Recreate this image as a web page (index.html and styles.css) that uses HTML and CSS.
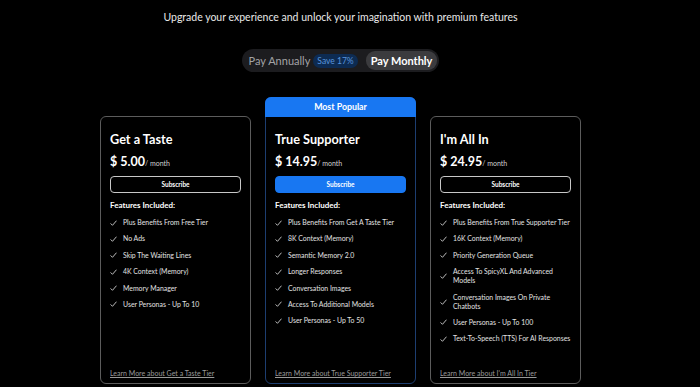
FILE: index.html
```html
<!DOCTYPE html>
<html lang="en">
<head>
    <meta charset="UTF-8">
    <meta name="viewport" content="width=device-width, initial-scale=1.0">
    <title>Upgrade</title>
    <link rel="stylesheet" href="styles.css">
</head>
<body>

    <div class="pricing">
        <p class="tagline">Upgrade your experience and unlock your imagination with premium features</p>

        <!-- Billing period switch -->
        <div class="billing-toggle">
            <span class="toggle-option">Pay Annually</span>
            <span class="save-badge">Save 17%</span>
            <span class="toggle-option active">Pay Monthly</span>
        </div>

        <div class="plans">
            <div class="plan">
                <div class="plan-body">
                    <h2 class="plan-name">Get a Taste</h2>
                    <div class="plan-price">$ 5.00<span class="per">/ month</span></div>
                    <button class="subscribe">Subscribe</button>
                    <div class="features-title">Features Included:</div>
                    <ul class="features">
                        <li><svg class="check" viewBox="0 0 8 7"><path d="M0.6 4 L2.8 6.2 L7.5 0.8"/></svg>Plus Benefits From Free Tier</li>
                        <li><svg class="check" viewBox="0 0 8 7"><path d="M0.6 4 L2.8 6.2 L7.5 0.8"/></svg>No Ads</li>
                        <li><svg class="check" viewBox="0 0 8 7"><path d="M0.6 4 L2.8 6.2 L7.5 0.8"/></svg>Skip The Waiting Lines</li>
                        <li><svg class="check" viewBox="0 0 8 7"><path d="M0.6 4 L2.8 6.2 L7.5 0.8"/></svg>4K Context (Memory)</li>
                        <li><svg class="check" viewBox="0 0 8 7"><path d="M0.6 4 L2.8 6.2 L7.5 0.8"/></svg>Memory Manager</li>
                        <li><svg class="check" viewBox="0 0 8 7"><path d="M0.6 4 L2.8 6.2 L7.5 0.8"/></svg>User Personas - Up To 10</li>
                    </ul>
                    <a class="learn-more" href="#">Learn More about Get a Taste Tier</a>
                </div>
            </div>

            <div class="plan featured">
                <div class="plan-header">Most Popular</div>
                <div class="plan-body">
                    <h2 class="plan-name">True Supporter</h2>
                    <div class="plan-price">$ 14.95<span class="per">/ month</span></div>
                    <button class="subscribe primary">Subscribe</button>
                    <div class="features-title">Features Included:</div>
                    <ul class="features">
                        <li><svg class="check" viewBox="0 0 8 7"><path d="M0.6 4 L2.8 6.2 L7.5 0.8"/></svg>Plus Benefits From Get A Taste Tier</li>
                        <li><svg class="check" viewBox="0 0 8 7"><path d="M0.6 4 L2.8 6.2 L7.5 0.8"/></svg>8K Context (Memory)</li>
                        <li><svg class="check" viewBox="0 0 8 7"><path d="M0.6 4 L2.8 6.2 L7.5 0.8"/></svg>Semantic Memory 2.0</li>
                        <li><svg class="check" viewBox="0 0 8 7"><path d="M0.6 4 L2.8 6.2 L7.5 0.8"/></svg>Longer Responses</li>
                        <li><svg class="check" viewBox="0 0 8 7"><path d="M0.6 4 L2.8 6.2 L7.5 0.8"/></svg>Conversation Images</li>
                        <li><svg class="check" viewBox="0 0 8 7"><path d="M0.6 4 L2.8 6.2 L7.5 0.8"/></svg>Access To Additional Models</li>
                        <li><svg class="check" viewBox="0 0 8 7"><path d="M0.6 4 L2.8 6.2 L7.5 0.8"/></svg>User Personas - Up To 50</li>
                    </ul>
                    <a class="learn-more" href="#">Learn More about True Supporter Tier</a>
                </div>
            </div>

            <div class="plan">
                <div class="plan-body">
                    <h2 class="plan-name">I'm All In</h2>
                    <div class="plan-price">$ 24.95<span class="per">/ month</span></div>
                    <button class="subscribe">Subscribe</button>
                    <div class="features-title">Features Included:</div>
                    <ul class="features">
                        <li><svg class="check" viewBox="0 0 8 7"><path d="M0.6 4 L2.8 6.2 L7.5 0.8"/></svg>Plus Benefits From True Supporter Tier</li>
                        <li><svg class="check" viewBox="0 0 8 7"><path d="M0.6 4 L2.8 6.2 L7.5 0.8"/></svg>16K Context (Memory)</li>
                        <li><svg class="check" viewBox="0 0 8 7"><path d="M0.6 4 L2.8 6.2 L7.5 0.8"/></svg>Priority Generation Queue</li>
                        <li><svg class="check" viewBox="0 0 8 7"><path d="M0.6 4 L2.8 6.2 L7.5 0.8"/></svg>Access To SpicyXL And Advanced Models</li>
                        <li><svg class="check" viewBox="0 0 8 7"><path d="M0.6 4 L2.8 6.2 L7.5 0.8"/></svg>Conversation Images On Private Chatbots</li>
                        <li><svg class="check" viewBox="0 0 8 7"><path d="M0.6 4 L2.8 6.2 L7.5 0.8"/></svg>User Personas - Up To 100</li>
                        <li><svg class="check" viewBox="0 0 8 7"><path d="M0.6 4 L2.8 6.2 L7.5 0.8"/></svg>Text-To-Speech (TTS) For AI Responses</li>
                    </ul>
                    <a class="learn-more" href="#">Learn More about I'm All In Tier</a>
                </div>
            </div>
        </div>
    </div>

</body>
</html>
```

FILE: styles.css
```css
body {
    margin: 0;
    padding-right: 19px;
    background-color: #000;
    color: #fff;
    font-family: Lato, "Noto Sans", sans-serif;
    overflow: hidden;
}

.pricing {
    display: flex;
    flex-direction: column;
    align-items: center;
}

.tagline {
    margin: 10px 0 0;
    font-size: 10.5px;
    line-height: 14px;
    color: #e8e8e8;
}

/* Billing switch */
.billing-toggle {
    display: flex;
    align-items: center;
    margin-top: 25px;
    height: 23px;
    padding: 0 2px 0 7px;
    box-sizing: border-box;
    background-color: #1c1c1f;
    border-radius: 12px;
}

.toggle-option {
    font-size: 11px;
    color: #a3a3a6;
}

.save-badge {
    margin-left: 3px;
    padding: 2px 4px;
    font-size: 8.5px;
    color: #5a96dd;
    background-color: #0d2b52;
    border-radius: 7px;
}

.toggle-option.active {
    margin-left: 8px;
    padding: 3px 5px;
    color: #fff;
    font-weight: bold;
    background-color: #3b3b3e;
    border-radius: 9px;
}

/* Plan cards */
.plans {
    display: flex;
    align-items: flex-end;
    gap: 14px;
    margin-top: 25px;
}

.plan {
    width: 151px;
    height: 268px;
    box-sizing: border-box;
    display: flex;
    flex-direction: column;
    border: 1px solid #5c5c5c;
    border-radius: 6px;
}

.plan.featured {
    height: 287px;
    border-color: #1d3e70;
}

.plan-header {
    margin: -1px -1px 0;
    height: 20px;
    line-height: 20px;
    text-align: center;
    font-size: 8.8px;
    font-weight: bold;
    background-color: #1877f2;
    border-radius: 6px 6px 0 0;
}

.plan-body {
    flex: 1;
    display: flex;
    flex-direction: column;
    padding: 14px 8px 5px 9px;
}

.plan-name {
    margin: 0;
    font-size: 12.7px;
    line-height: 16px;
}

.plan-price {
    margin-top: 6px;
    font-size: 12.5px;
    font-weight: bold;
    line-height: 18px;
}

.plan-price .per {
    font-size: 7px;
    font-weight: normal;
    color: #d0d0d0;
}

.subscribe {
    margin-top: 4px;
    margin-right: 1px;
    height: 17px;
    padding: 0;
    font-family: inherit;
    font-size: 6.5px;
    font-weight: bold;
    color: #fff;
    background-color: transparent;
    border: 1px solid #c8c8c8;
    border-radius: 4px;
}

.subscribe.primary {
    background-color: #1877f2;
    border-color: #1877f2;
}

.features-title {
    margin-top: 8px;
    font-size: 8px;
    font-weight: bold;
    line-height: 9px;
}

.features {
    list-style: none;
    margin: 8px 0 0;
    padding: 0;
    display: flex;
    flex-direction: column;
    gap: 7.4px;
}

.features li {
    display: flex;
    align-items: center;
    font-size: 6.9px;
    line-height: 9px;
    color: #e2e2e2;
}

.check {
    flex: none;
    width: 7px;
    height: 6px;
    margin-right: 6px;
    fill: none;
    stroke: #dcdcdc;
    stroke-width: 1;
}

.learn-more {
    margin-top: auto;
    font-size: 7px;
    line-height: 9px;
    color: #9a9a9a;
}
```
